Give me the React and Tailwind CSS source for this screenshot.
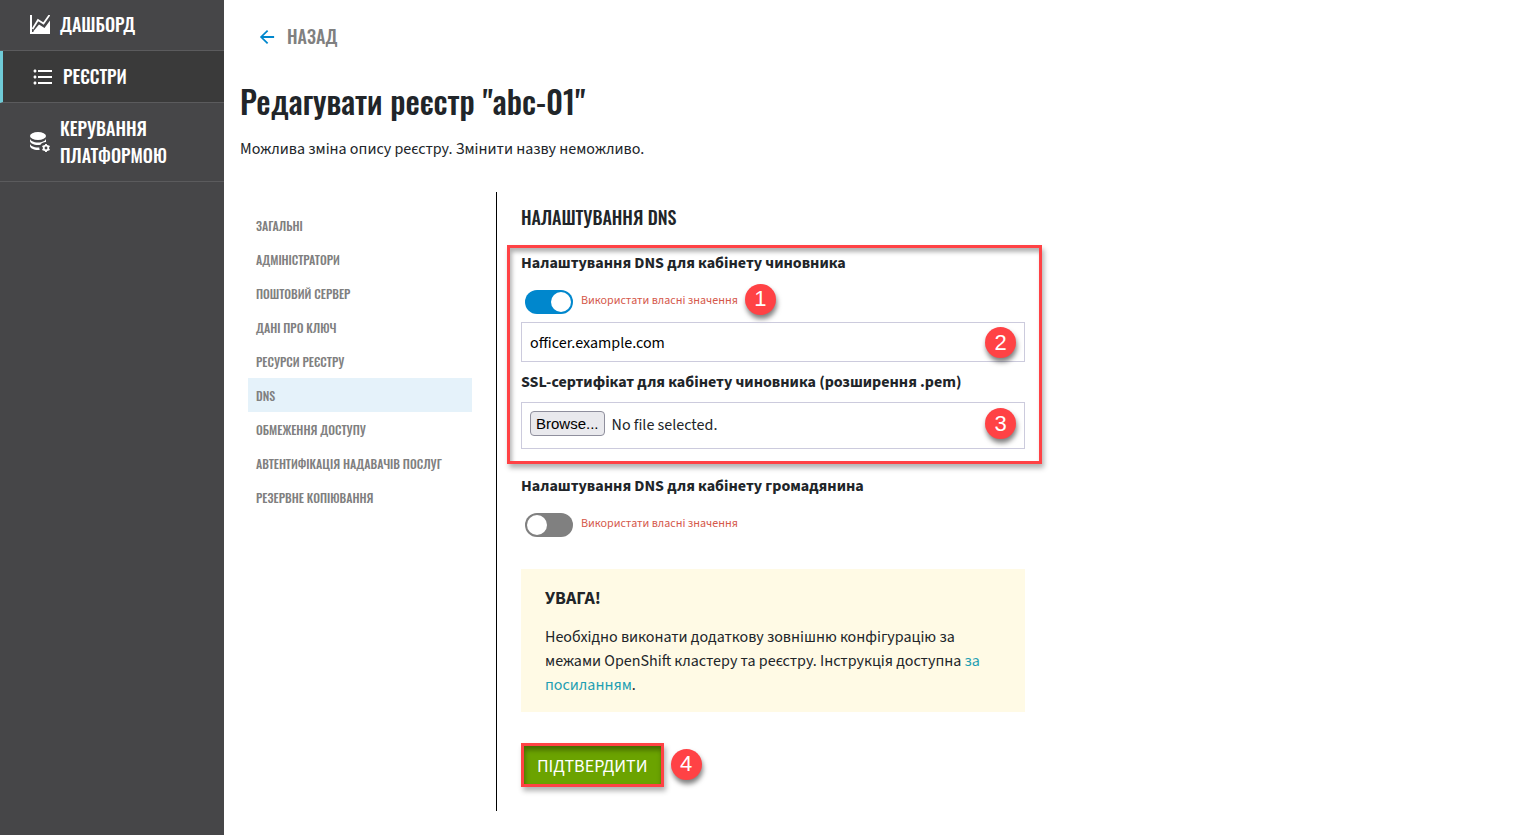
import { useState } from "react";
import { MdFormatListBulleted, MdArrowBack } from "react-icons/md";

const SECTIONS = [
  "Загальні",
  "Адміністратори",
  "Поштовий сервер",
  "Дані про ключ",
  "Ресурси реєстру",
  "DNS",
  "Обмеження доступу",
  "Автентифікація надавачів послуг",
  "Резервне копіювання",
];

const heading = "font-['Oswald','Roboto_Condensed','Liberation_Sans_Narrow',sans-serif] font-medium";

function ChartIcon() {
  return (
    <svg viewBox="0 0 20 20" className="h-5 w-5 shrink-0" fill="none" aria-hidden="true">
      <path d="M1 0v18h19" stroke="#fff" strokeWidth="2" />
      <path d="M3.500 18v-2L9 9.500l5.500 3.500L20 5.500V18z" fill="#fff" />
      <path d="M2.500 14L8 5l5.500 3.500L19.500 0" stroke="#fff" strokeWidth="1.800" />
    </svg>
  );
}

function DatabaseGearIcon() {
  return (
    <svg viewBox="0 0 20 20" className="h-5 w-5 shrink-0" fill="#fff" aria-hidden="true">
      <ellipse cx="8" cy="4" rx="8" ry="4" />
      <path d="M0 6.500V9c0 2.200 3.600 4 8 4 .9 0 1.700 0 2.500-.2C11.600 11 13.600 10 16 10V6.500c0 2.200-3.600 4-8 4s-8-1.800-8-4z" />
      <path d="M0 11.500V14c0 2.200 3.600 4 8 4h1.700c-.3-.8-.4-1.600-.4-2.500H8c-4.400 0-8-1.800-8-4z" />
      <circle cx="16" cy="16" r="2.300" fill="none" stroke="#fff" strokeWidth="1.800" />
      <path d="M16 12v8M12.500 14l7 4M12.500 18l7-4" stroke="#fff" strokeWidth="1.800" />
      <circle cx="16" cy="16" r="1.400" fill="#464648" />
    </svg>
  );
}

function Marker({ children, className = "" }) {
  return (
    <span
      className={`flex h-[31px] w-[31px] items-center justify-center rounded-full bg-[#ff4245] font-['Liberation_Sans',sans-serif] text-[22px] leading-none text-white shadow-[1px_4px_5px_rgba(0,0,0,0.5)] ${className}`}
    >
      {children}
    </span>
  );
}

function Toggle({ id, checked, onChange }) {
  return (
    <div className="flex h-6 items-center gap-2 pl-1">
      <input
        id={id}
        type="checkbox"
        role="switch"
        checked={checked}
        onChange={(e) => onChange(e.target.checked)}
        className="h-6 w-12 shrink-0 cursor-pointer appearance-none rounded-full bg-[#808080] p-[2px] before:block before:h-5 before:w-5 before:rounded-full before:bg-white checked:bg-[#0087cd] checked:before:translate-x-6"
      />
      <label htmlFor={id} className="pb-0.5 text-xs leading-5 text-[#d5594b]">
        Використати власні значення
      </label>
    </div>
  );
}

export default function App() {
  const [officer, setOfficer] = useState(true);
  const [citizen, setCitizen] = useState(false);
  const [host, setHost] = useState("officer.example.com");

  return (
    <div className="flex min-h-screen bg-white font-['Source_Sans_Pro','Source_Sans_3','Noto_Sans',sans-serif] text-base text-[#212529]">
      <nav className={`w-56 shrink-0 bg-[#464648] text-lg leading-[27px] text-white uppercase ${heading}`}>
        <a href="#dashboard" className="flex items-center gap-2.5 border-b border-[#5b5b5d] px-[30px] pt-[11px] pb-3">
          <ChartIcon />
          Дашборд
        </a>
        <a href="#registries" className="flex items-center gap-2.5 border-b border-l-[3px] border-b-[#5b5b5d] border-l-[#6fcbd7] bg-[#3a3a3a] px-[30px] py-3">
          <MdFormatListBulleted viewBox="2 2 20 20" className="h-5 w-5 shrink-0" />
          Реєстри
        </a>
        <a href="#platform" className="flex items-center gap-2.5 border-b border-[#5b5b5d] px-[30px] py-3">
          <DatabaseGearIcon />
          Керування платформою
        </a>
      </nav>

      <main className="min-w-0 flex-1 px-4 pt-[23px] pb-6">
        <a href="#back" className={`flex items-center gap-3 pl-[19px] text-lg leading-[27px] text-[#808080] uppercase ${heading}`}>
          <MdArrowBack viewBox="3 3 18 18" className="h-4 w-4 text-[#0087cd]" />
          Назад
        </a>
        <h1 className={`mt-[27px] text-[32px] leading-12 ${heading}`}>Редагувати реєстр "abc-01"</h1>
        <p className="mt-3 leading-6">Можлива зміна опису реєстру. Змінити назву неможливо.</p>

        <div className="mt-[31px] flex">
          <ul className={`w-64 shrink-0 py-4 pr-6 pl-2 text-xs text-[#808080] uppercase ${heading}`}>
            {SECTIONS.map((s) => (
              <li key={s}>
                <a href="#section" className={`block px-2 pt-[9px] pb-[7px] leading-[18px] ${s === "DNS" ? "bg-[#e5f2fa]" : ""}`}>
                  {s}
                </a>
              </li>
            ))}
          </ul>

          <form className="max-w-[529px] min-w-0 flex-1 border-l border-black pb-6 pl-6" onSubmit={(e) => e.preventDefault()}>
            <h2 className={`mt-[11px] text-lg leading-7 uppercase ${heading}`}>Налаштування DNS</h2>

            <section className="relative mt-5">
              <div className="pointer-events-none absolute -top-1.5 -right-[17px] -bottom-[15px] -left-3.5 border-[3px] border-[#ff4245] shadow-[2px_4px_5px_rgba(0,0,0,0.3),inset_2px_4px_4px_rgba(0,0,0,0.3)]" />
              <h3 className="leading-6 font-bold">Налаштування DNS для кабінету чиновника</h3>
              <div className="mt-[15px] flex h-6 items-center gap-[7px]">
                <Toggle id="officer" checked={officer} onChange={setOfficer} />
                <Marker className="mb-1.5">1</Marker>
              </div>
              <div className="relative mt-2">
                <input
                  aria-label="DNS"
                  value={host}
                  onChange={(e) => setHost(e.target.value)}
                  className="h-10 w-full border border-[#cccbdd] px-2 pt-0.5 text-black outline-none"
                />
                <Marker className="absolute top-[5px] right-[9px]">2</Marker>
              </div>
              <h3 className="mt-2 leading-6 font-bold">SSL-сертифікат для кабінету чиновника (розширення .pem)</h3>
              <div className="relative mt-2 flex h-[47px] items-center border border-[#cccbdd] px-2 pb-1">
                <input id="cert" type="file" accept=".pem" className="peer sr-only" />
                <label htmlFor="cert" className="cursor-pointer rounded-[4px] border border-[#8f8f9d] bg-[#e9e9ed] px-[5px] font-['Liberation_Sans',sans-serif] text-[15px] leading-[23px] text-black">
                  Browse...
                </label>
                <span className="ml-[7px] pt-0.5 leading-6">No file selected.</span>
                <Marker className="absolute top-[5px] right-2">3</Marker>
              </div>
            </section>

            <h3 className="mt-[25px] leading-6 font-bold">Налаштування DNS для кабінету громадянина</h3>
            <div className="mt-[15px]">
              <Toggle id="citizen" checked={citizen} onChange={setCitizen} />
            </div>

            <div className="mt-8 bg-[#fffae5] p-6 pt-[18px] pb-[15px]">
              <p className="text-lg leading-6 font-bold">УВАГА!</p>
              <p className="mt-3.5 leading-6">
                Необхідно виконати додаткову зовнішню конфігурацію за межами OpenShift кластеру та реєстру. Інструкція доступна{" "}
                <a href="#guide" className="text-[#1f9fb3]">за посиланням</a>.
              </p>
            </div>

            <div className="mt-[31px] flex items-center gap-[7px]">
              <button type="submit" className="h-11 border-[3px] border-[#ff4245] bg-[#6ba300] px-[13px] pt-1 text-lg leading-6 text-white uppercase shadow-[2px_4px_5px_rgba(0,0,0,0.3),inset_1px_4px_5px_rgba(0,0,0,0.35)]">
                Підтвердити
              </button>
              <Marker className="mb-0.5">4</Marker>
            </div>
          </form>
        </div>
      </main>
    </div>
  );
}
